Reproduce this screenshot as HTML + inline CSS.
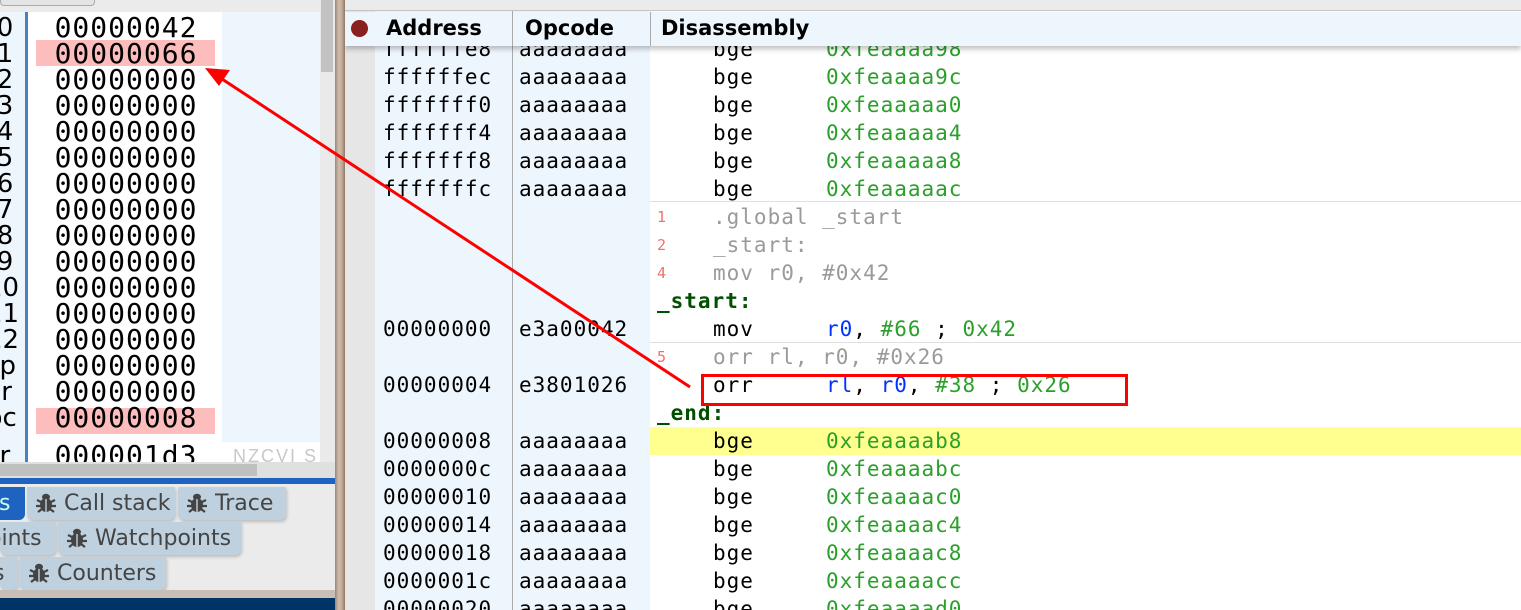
<!DOCTYPE html>
<html><head><meta charset="utf-8"><style>
*{margin:0;padding:0;box-sizing:border-box}
body{width:1521px;height:610px;overflow:hidden;position:relative;background:#ebebeb;font-family:"Liberation Sans",sans-serif}
.a{position:absolute}
.m{font-family:"DejaVu Sans Mono","Liberation Mono",monospace;white-space:pre}
.r{position:absolute;left:0;width:1176px;height:28px;line-height:28px;font-size:21px;letter-spacing:1px}
.r span{position:absolute;top:0}
.ad{left:38px}.op{left:174px}.mn{left:368px}.ar{left:481px}
.g{color:#2aa02a}.b{color:#0033ff}.src{color:#9a9a9a}.ln{color:#f07070;font-size:15px;left:312px}
.lab{left:312px;color:#005000;font-weight:bold}
.reg{position:absolute;left:36px;width:180px;height:24px;line-height:26px;font-size:28px;text-align:center;letter-spacing:1px}
.rn{position:absolute;left:-50px;font-size:26px;line-height:26px;font-family:"DejaVu Sans",sans-serif;letter-spacing:0}
.tab{position:absolute;height:33px;background:#bfd0de;border-radius:0 0 6px 6px;font-family:"DejaVu Sans",sans-serif;font-size:22px;color:#444;line-height:33px;padding-left:8px;box-shadow:1px 2px 3px rgba(0,0,0,.2);white-space:nowrap}
.bug{display:inline-block;width:22px;height:22px;vertical-align:-3px;margin-right:7px}
</style></head><body>
<div class="a" style="left:0;top:0;width:95px;height:6px;border:1px solid #aaa;border-top:0;border-radius:0 0 4px 4px;background:#e4e4e4"></div>
<div class="a" style="left:709px;top:0;width:436px;height:3px;border:1px solid #777;border-top:0;background:#fff"></div>
<div class="a" style="left:1222px;top:0;width:148px;height:4px;border:1px solid #aaa;border-top:0;border-radius:0 0 6px 6px;background:#ddd"></div>

<div class="a" style="left:0;top:12px;width:320px;height:450px;background:#fff;overflow:hidden">
 <div class="a" style="left:0;top:0;width:26px;height:450px;background:#eef6fd"></div>
 <div class="a" style="left:25px;top:0;width:3px;height:450px;background:#4a80c0"></div>
 <div class="a" style="left:222px;top:0;width:98px;height:430px;background:#eef6fd"></div>
 <div class="a" style="left:36px;top:28px;width:179px;height:26px;background:#fdbdbd"></div>
 <div class="a" style="left:36px;top:396px;width:179px;height:26px;background:#fdbdbd"></div>
 <div class="m" style="position:absolute;left:0;top:3px">
  <div class="reg" style="top:0"><span class="rn">r0</span>00000042</div>
  <div class="reg" style="top:26px"><span class="rn">r1</span>00000066</div>
  <div class="reg" style="top:52px"><span class="rn">r2</span>00000000</div>
  <div class="reg" style="top:78px"><span class="rn">r3</span>00000000</div>
  <div class="reg" style="top:104px"><span class="rn">r4</span>00000000</div>
  <div class="reg" style="top:130px"><span class="rn">r5</span>00000000</div>
  <div class="reg" style="top:156px"><span class="rn">r6</span>00000000</div>
  <div class="reg" style="top:182px"><span class="rn">r7</span>00000000</div>
  <div class="reg" style="top:208px"><span class="rn">r8</span>00000000</div>
  <div class="reg" style="top:234px"><span class="rn">r9</span>00000000</div>
  <div class="reg" style="top:260px"><span class="rn">10</span>00000000</div>
  <div class="reg" style="top:286px"><span class="rn">11</span>00000000</div>
  <div class="reg" style="top:312px"><span class="rn">12</span>00000000</div>
  <div class="reg" style="top:338px"><span class="rn">sp</span>00000000</div>
  <div class="reg" style="top:364px"><span class="rn" style="left:-42px">lr</span>00000000</div>
  <div class="reg" style="top:390px"><span class="rn">pc</span>00000008</div>
  <div class="reg" style="top:428px"><span class="rn">sr</span>000001d3</div>
 </div>
 <div class="a" style="left:233px;top:434px;font-size:18px;color:#c8c8c8;letter-spacing:2px">NZCVI S</div>
</div>
<div class="a" style="left:320px;top:0;width:15px;height:462px;background:#eaeaea"></div>
<div class="a" style="left:321px;top:0;width:12px;height:72px;background:#c2c2c2"></div>
<div class="a" style="left:0;top:462px;width:335px;height:16px;background:#e0e0e0"></div>
<div class="a" style="left:0;top:464px;width:257px;height:12px;background:#c0c0c0"></div>
<div class="a" style="left:0;top:478px;width:335px;height:6px;background:#1e63c0"></div>
<div class="a" style="left:0;top:484px;width:335px;height:106px;background:#ebebeb"></div>
<div class="a" style="left:0;top:487px;width:25px;height:33px;background:#1e63c0;border-radius:0 0 6px 0;color:#cfe;font-family:'DejaVu Sans',sans-serif;font-size:22px;line-height:33px;overflow:hidden"><span style="margin-left:-10px">rs</span></div>
<svg width="0" height="0" style="position:absolute"><defs><symbol id="bug" viewBox="0 0 22 22"><ellipse cx="11" cy="6" rx="4" ry="3.2" fill="#444"/><ellipse cx="11" cy="14" rx="6" ry="7" fill="#444"/><path d="M2 9l4 2M20 9l-4 2M1 15h5M21 15h-5M3 21l4-3M19 21l-4-3" stroke="#444" stroke-width="2.2"/><path d="M11 8v13" stroke="#bfd0de" stroke-width="1.4"/></symbol></defs></svg>
<div class="tab" style="left:27px;top:487px;width:148px"><svg class="bug"><use href="#bug"/></svg>Call stack</div>
<div class="tab" style="left:178px;top:487px;width:108px"><svg class="bug"><use href="#bug"/></svg>Trace</div>
<div class="tab" style="left:0;top:522px;width:56px;padding-left:0"><span style="margin-left:-12px">oints</span></div>
<div class="tab" style="left:58px;top:522px;width:183px"><svg class="bug"><use href="#bug"/></svg>Watchpoints</div>
<div class="tab" style="left:0;top:557px;width:18px;padding-left:0;overflow:hidden"><span style="margin-left:-7px">s</span></div>
<div class="tab" style="left:20px;top:557px;width:146px"><svg class="bug"><use href="#bug"/></svg>Counters</div>
<div class="a" style="left:0;top:590px;width:335px;height:8px;background:#c8beb8"></div>
<div class="a" style="left:0;top:598px;width:335px;height:12px;background:#003366"></div>

<div class="a" style="left:335px;top:0;width:10px;height:610px;background:linear-gradient(90deg,#9c8878,#d2bcac 40%,#c0a896 70%,#8c7868)"></div>

<div class="a" style="left:345px;top:0;width:1176px;height:610px;background:#fff;overflow:hidden">
 <div class="a" style="left:0;top:0;width:1176px;height:11px;background:#ebebeb;border-bottom:1px solid #c8c8c8"></div>
 <div class="a" style="left:0;top:11px;width:30px;height:600px;background:#e6e6e6"></div>
 <div class="a" style="left:30px;top:11px;width:275px;height:600px;background:#eef6fd"></div>
 <div class="a" style="left:167px;top:11px;width:1px;height:600px;background:#aaa"></div>
 <div class="a" style="left:305px;top:201px;width:871px;height:1px;background:#e0e0e0"></div>
 <div class="a" style="left:305px;top:342px;width:871px;height:1px;background:#e0e0e0"></div>
 <div class="a" style="left:305px;top:427px;width:871px;height:28px;background:#ffff90"></div>
 <div class="m">
  <div class="r" style="top:35px"><span class="ad">ffffffe8</span><span class="op">aaaaaaaa</span><span class="mn">bge</span><span class="ar g">0xfeaaaa98</span></div>
  <div class="r" style="top:63px"><span class="ad">ffffffec</span><span class="op">aaaaaaaa</span><span class="mn">bge</span><span class="ar g">0xfeaaaa9c</span></div>
  <div class="r" style="top:91px"><span class="ad">fffffff0</span><span class="op">aaaaaaaa</span><span class="mn">bge</span><span class="ar g">0xfeaaaaa0</span></div>
  <div class="r" style="top:119px"><span class="ad">fffffff4</span><span class="op">aaaaaaaa</span><span class="mn">bge</span><span class="ar g">0xfeaaaaa4</span></div>
  <div class="r" style="top:147px"><span class="ad">fffffff8</span><span class="op">aaaaaaaa</span><span class="mn">bge</span><span class="ar g">0xfeaaaaa8</span></div>
  <div class="r" style="top:175px"><span class="ad">fffffffc</span><span class="op">aaaaaaaa</span><span class="mn">bge</span><span class="ar g">0xfeaaaaac</span></div>
  <div class="r" style="top:203px"><span class="ln">1</span><span class="mn src">.global _start</span></div>
  <div class="r" style="top:231px"><span class="ln">2</span><span class="mn src">_start:</span></div>
  <div class="r" style="top:259px"><span class="ln">4</span><span class="mn src">mov r0, #0x42</span></div>
  <div class="r" style="top:287px"><span class="lab">_start:</span></div>
  <div class="r" style="top:315px"><span class="ad">00000000</span><span class="op">e3a00042</span><span class="mn">mov</span><span class="ar"><b class="b" style="font-weight:normal">r0</b>, <b class="g" style="font-weight:normal">#66</b> ; <b class="g" style="font-weight:normal">0x42</b></span></div>
  <div class="r" style="top:343px"><span class="ln">5</span><span class="mn src">orr rl, r0, #0x26</span></div>
  <div class="r" style="top:371px"><span class="ad">00000004</span><span class="op">e3801026</span><span class="mn">orr</span><span class="ar"><b class="b" style="font-weight:normal">rl</b>, <b class="b" style="font-weight:normal">r0</b>, <b class="g" style="font-weight:normal">#38</b> ; <b class="g" style="font-weight:normal">0x26</b></span></div>
  <div class="r" style="top:399px"><span class="lab">_end:</span></div>
  <div class="r" style="top:427px"><span class="ad">00000008</span><span class="op">aaaaaaaa</span><span class="mn">bge</span><span class="ar g">0xfeaaaab8</span></div>
  <div class="r" style="top:455px"><span class="ad">0000000c</span><span class="op">aaaaaaaa</span><span class="mn">bge</span><span class="ar g">0xfeaaaabc</span></div>
  <div class="r" style="top:483px"><span class="ad">00000010</span><span class="op">aaaaaaaa</span><span class="mn">bge</span><span class="ar g">0xfeaaaac0</span></div>
  <div class="r" style="top:511px"><span class="ad">00000014</span><span class="op">aaaaaaaa</span><span class="mn">bge</span><span class="ar g">0xfeaaaac4</span></div>
  <div class="r" style="top:539px"><span class="ad">00000018</span><span class="op">aaaaaaaa</span><span class="mn">bge</span><span class="ar g">0xfeaaaac8</span></div>
  <div class="r" style="top:567px"><span class="ad">0000001c</span><span class="op">aaaaaaaa</span><span class="mn">bge</span><span class="ar g">0xfeaaaacc</span></div>
  <div class="r" style="top:595px"><span class="ad">00000020</span><span class="op">aaaaaaaa</span><span class="mn">bge</span><span class="ar g">0xfeaaaad0</span></div>
 </div>
 <div class="a" style="left:0;top:12px;width:1176px;height:34px;background:#eef6fd;box-shadow:0 3px 5px rgba(0,0,0,.25);font-family:'DejaVu Sans',sans-serif;font-weight:bold;font-size:21px;line-height:32px">
  <div class="a" style="left:6px;top:8px;width:17px;height:17px;border-radius:50%;background:#8b2020"></div>
  <div class="a" style="left:41px">Address</div>
  <div class="a" style="left:167px;top:0;width:1px;height:34px;background:#aaa"></div>
  <div class="a" style="left:180px">Opcode</div>
  <div class="a" style="left:305px;top:0;width:1px;height:34px;background:#aaa"></div>
  <div class="a" style="left:316px">Disassembly</div>
 </div>
</div>

<div class="a" style="left:701px;top:374px;width:427px;height:32px;border:3px solid #f00"></div>
<svg class="a" style="left:0;top:0" width="1521" height="610"><line x1="690" y1="387" x2="222" y2="79" stroke="#f00" stroke-width="3"/><polygon points="205,68 230,70 219,86" fill="#f00"/></svg>
</body></html>
